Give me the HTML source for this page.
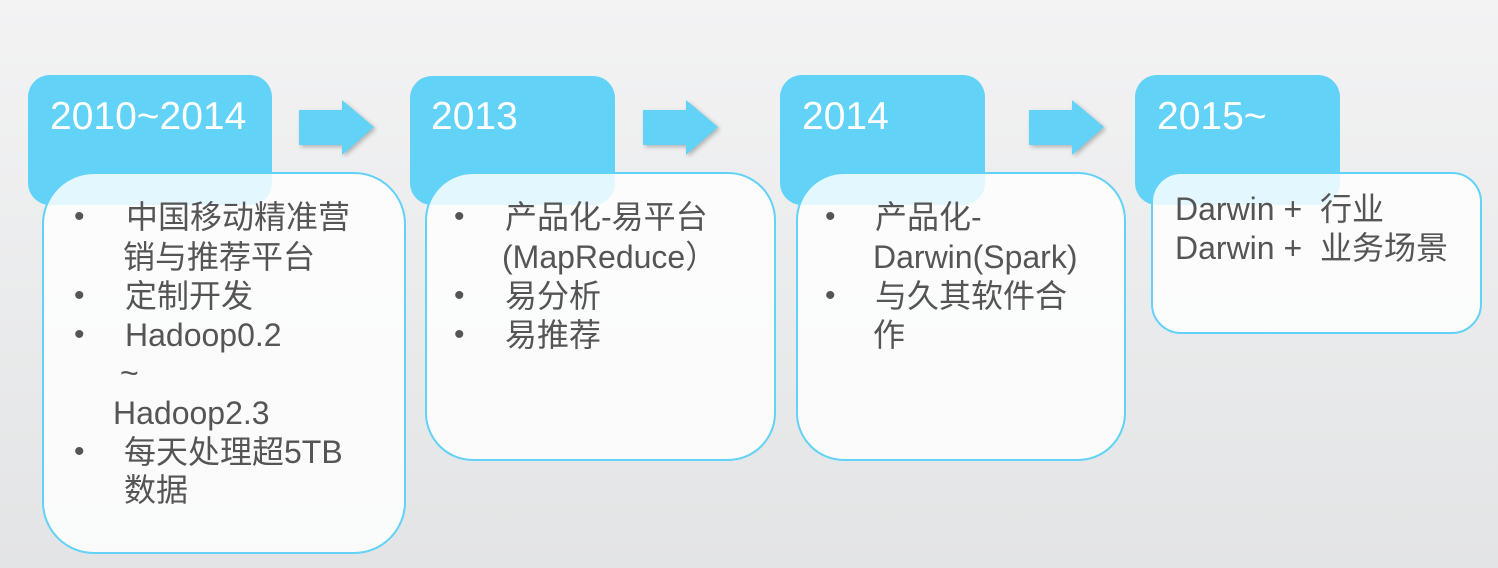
<!DOCTYPE html>
<html><head><meta charset="utf-8"><style>
body{margin:0;width:1498px;height:568px;overflow:hidden;background:linear-gradient(180deg,#f3f3f4 0%,#e9eaeb 60%,#e3e4e5 100%);font-family:"Liberation Sans","Noto Sans CJK SC",sans-serif;position:relative}
.b{position:absolute;background:#62d2f6;border-radius:22px}
.y{position:absolute;color:#fff;font-size:39px;line-height:40px}
.w{position:absolute;background:rgba(255,255,255,0.82);border:2px solid #62d2f6;box-sizing:border-box}
.t{position:absolute;color:#555;font-size:32px;line-height:36px;white-space:nowrap}
.d{position:absolute;color:#555;font-size:30px;line-height:36px}
svg{position:absolute}
</style></head><body>
<div class="b" style="left:28px;top:75px;width:244px;height:130px"></div>
<div class="b" style="left:410px;top:76px;width:205px;height:129px"></div>
<div class="b" style="left:780px;top:75px;width:205px;height:130px"></div>
<div class="b" style="left:1135px;top:75px;width:205px;height:130px"></div>
<div class="y" style="left:50px;top:97px">2010~2014</div>
<div class="y" style="left:431px;top:97px">2013</div>
<div class="y" style="left:802px;top:97px">2014</div>
<div class="y" style="left:1157px;top:97px">2015~</div>

<svg style="left:296px;top:98px" width="82" height="60"><polygon points="3,12 46,12 46,2 78,29 46,57 46,47 3,47" fill="#62d2f6" style="filter:drop-shadow(2px 2px 2px rgba(0,0,0,.25))"/></svg>
<svg style="left:640px;top:98px" width="82" height="60"><polygon points="3,12 46,12 46,2 78,29 46,57 46,47 3,47" fill="#62d2f6" style="filter:drop-shadow(2px 2px 2px rgba(0,0,0,.25))"/></svg>
<svg style="left:1026px;top:98px" width="82" height="60"><polygon points="3,12 46,12 46,2 78,29 46,57 46,47 3,47" fill="#62d2f6" style="filter:drop-shadow(2px 2px 2px rgba(0,0,0,.25))"/></svg>

<div class="w" style="left:42px;top:172px;width:364px;height:382px;border-radius:52px"></div>
<div class="w" style="left:425px;top:172px;width:351px;height:289px;border-radius:48px"></div>
<div class="w" style="left:796px;top:172px;width:330px;height:289px;border-radius:48px"></div>
<div class="w" style="left:1151px;top:172px;width:331px;height:162px;border-radius:30px"></div>

<div class="d" style="left:74px;top:199px">•</div>
<div class="t" style="left:126px;top:199px">中国移动精准营</div>
<div class="t" style="left:123px;top:239px">销与推荐平台</div>
<div class="d" style="left:74px;top:278px">•</div>
<div class="t" style="left:125px;top:278px">定制开发</div>
<div class="d" style="left:74px;top:317px">•</div>
<div class="t" style="left:125px;top:317px">Hadoop0.2</div>
<div class="t" style="left:120px;top:355px">~</div>
<div class="t" style="left:113px;top:395px">Hadoop2.3</div>
<div class="d" style="left:74px;top:434px">•</div>
<div class="t" style="left:124px;top:434px">每天处理超5TB</div>
<div class="t" style="left:124px;top:472px">数据</div>

<div class="d" style="left:454px;top:199px">•</div>
<div class="t" style="left:505px;top:199px">产品化-易平台</div>
<div class="t" style="left:502px;top:239px">(MapReduce）</div>
<div class="d" style="left:454px;top:278px">•</div>
<div class="t" style="left:505px;top:278px">易分析</div>
<div class="d" style="left:454px;top:317px">•</div>
<div class="t" style="left:505px;top:317px">易推荐</div>

<div class="d" style="left:825px;top:199px">•</div>
<div class="t" style="left:875px;top:199px">产品化-</div>
<div class="t" style="left:873px;top:239px">Darwin(Spark)</div>
<div class="d" style="left:825px;top:278px">•</div>
<div class="t" style="left:875px;top:278px">与久其软件合</div>
<div class="t" style="left:873px;top:317px">作</div>

<div class="t" style="left:1175px;top:191px">Darwin +&nbsp; 行业</div>
<div class="t" style="left:1175px;top:230px">Darwin +&nbsp; 业务场景</div>
</body></html>
